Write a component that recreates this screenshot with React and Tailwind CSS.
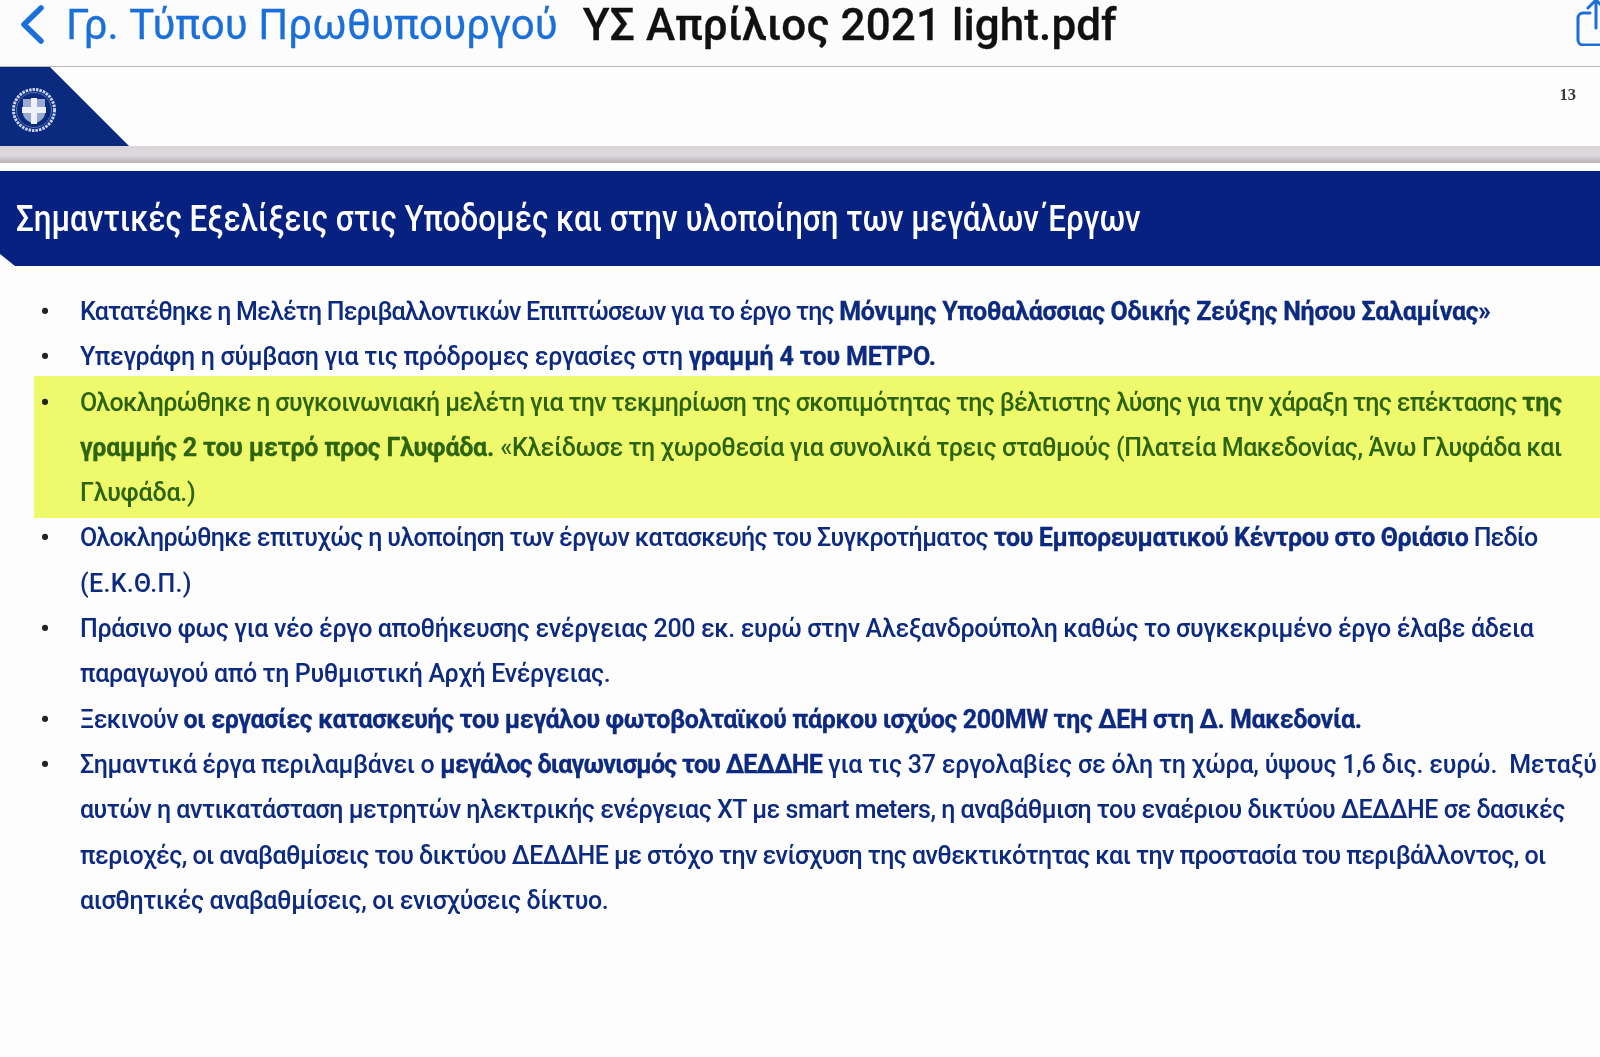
import React from "react";

const S = ({ c, children }) => <span className={`font-medium ${c}`}>{children}</span>;
const B = ({ c, children }) => <span className={`font-bold [-webkit-text-stroke:0.3px] ${c}`}>{children}</span>;

const items = [
  { lines: [<><S c="tracking-[-0.81px]">Κατατέθηκε η Μελέτη Περιβαλλοντικών Επιπτώσεων για το έργο της </S><B c="tracking-[-0.3px]">Μόνιμης Υποθαλάσσιας Οδικής Ζεύξης Νήσου Σαλαμίνας»</B></>] },
  { lines: [<><S c="tracking-[-0.3px]">Υπεγράφη η σύμβαση για τις πρόδρομες εργασίες στη </S><B c="tracking-[-0.14px]">γραμμή 4 του ΜΕΤΡΟ.</B></>] },
  { hl: true, lines: [
    <><S c="tracking-[-0.66px]">Ολοκληρώθηκε η συγκοινωνιακή μελέτη για την τεκμηρίωση της σκοπιμότητας της βέλτιστης λύσης για την χάραξη της επέκτασης </S><B c="tracking-[0px]">της</B></>,
    <><B c="tracking-[-0.23px]">γραμμής 2 του μετρό προς Γλυφάδα.</B> <S c="tracking-[-0.43px]">«Κλείδωσε τη χωροθεσία για συνολικά τρεις σταθμούς (Πλατεία Μακεδονίας, Άνω Γλυφάδα και</S></>,
    <S c="tracking-[-0.2px]">Γλυφάδα.)</S>,
  ] },
  { lines: [
    <><S c="tracking-[-0.62px]">Ολοκληρώθηκε επιτυχώς η υλοποίηση των έργων κατασκευής του Συγκροτήματος </S><B c="tracking-[-0.39px]">του Εμπορευματικού Κέντρου στο Θριάσιο</B><S c="tracking-[-0.88px]"> Πεδίο</S></>,
    <S c="tracking-[0.32px]">(Ε.Κ.Θ.Π.)</S>,
  ] },
  { lines: [
    <S c="tracking-[-0.365px]">Πράσινο φως για νέο έργο αποθήκευσης ενέργειας 200 εκ. ευρώ στην Αλεξανδρούπολη καθώς το συγκεκριμένο έργο έλαβε άδεια</S>,
    <S c="tracking-[-0.36px]">παραγωγού από τη Ρυθμιστική Αρχή Ενέργειας.</S>,
  ] },
  { lines: [<><S c="tracking-[-0.58px]">Ξεκινούν </S><B c="tracking-[-0.37px]">οι εργασίες κατασκευής του μεγάλου φωτοβολταϊκού πάρκου ισχύος 200MW της ΔΕΗ στη Δ. Μακεδονία.</B></>] },
  { lines: [
    <><S c="tracking-[-0.36px]">Σημαντικά έργα περιλαμβάνει ο </S><B c="tracking-[-0.73px]">μεγάλος διαγωνισμός του ΔΕΔΔΗΕ</B><S c="tracking-[-0.21px]"> για τις 37 εργολαβίες σε όλη τη χώρα, ύψους 1,6 δις. ευρώ.&nbsp; Μεταξύ</S></>,
    <S c="tracking-[-0.49px]">αυτών η αντικατάσταση μετρητών ηλεκτρικής ενέργειας ΧΤ με smart meters, η αναβάθμιση του εναέριου δικτύου ΔΕΔΔΗΕ σε δασικές</S>,
    <S c="tracking-[-0.574px]">περιοχές, οι αναβαθμίσεις του δικτύου ΔΕΔΔΗΕ με στόχο την ενίσχυση της ανθεκτικότητας και την προστασία του περιβάλλοντος, οι</S>,
    <S c="tracking-[-0.39px]">αισθητικές αναβαθμίσεις, οι ενισχύσεις δίκτυο.</S>,
  ] },
];

function Emblem() {
  return (
    <svg width="46" height="46" viewBox="0 0 46 46" className="block">
      <circle cx="23" cy="23" r="20.5" fill="none" stroke="#c9d3ec" strokeWidth="3" strokeDasharray="2.5 1" />
      <circle cx="23" cy="23" r="17.5" fill="none" stroke="#5c74ad" strokeWidth="1" />
      <path d="M12 12h22v14c0 6-6 9-11 11-5-2-11-5-11-11z" fill="#9aa9cf" />
      <path d="M20 11h6v9h9v6h-9v11h-6V26h-9v-6h9z" fill="#eef1f9" />
    </svg>
  );
}

export default function App() {
  return (
    <div className="w-[1600px] h-[1057px] overflow-hidden bg-[#fdfdfd] font-['Roboto','Liberation_Sans',sans-serif] blur-[0.6px]">
      <header className="h-[67px] bg-[#fcfcfc] border-b border-[#bdb9b9] flex items-start relative">
        <svg width="30" height="40" viewBox="0 0 30 40" className="ml-[17px] mt-[4px] shrink-0">
          <path d="M24 4 7 20.5 24 37" fill="none" stroke="#1a6fd8" strokeWidth="5.5" strokeLinecap="round" strokeLinejoin="round" />
        </svg>
        <span className="ml-[19px] text-[#1a6fd8] text-[42px] leading-[50px] whitespace-nowrap tracking-[0.1px] [-webkit-text-stroke:0.3px]">Γρ. Τύπου Πρωθυπουργού</span>
        <span className="ml-[25px] text-[#111] text-[44px] leading-[50px] font-medium whitespace-nowrap tracking-[0.1px] [-webkit-text-stroke:0.3px]">ΥΣ Απρίλιος 2021 light.pdf</span>
        <svg width="40" height="50" viewBox="0 0 40 50" className="absolute left-[1574px] top-[-4px]">
          <path d="M16 17H9a5 5 0 0 0-5 5v22a5 5 0 0 0 5 5h30" fill="none" stroke="#1a6fd8" strokeWidth="3" strokeLinecap="round" />
          <path d="M22 32V4M14 12l8-8 8 8" fill="none" stroke="#1a6fd8" strokeWidth="3" strokeLinecap="round" strokeLinejoin="round" />
        </svg>
      </header>

      <div className="h-[79px] flex justify-between relative">
        <svg width="130" height="79" viewBox="0 0 130 79" className="block">
          <polygon points="0,0 50,0 129,79 0,79" fill="#0a2a80" />
        </svg>
        <div className="absolute left-[11px] top-[20px]"><Emblem /></div>
        <span className="mt-[18px] mr-[24px] text-[16.5px] leading-[20px] font-bold text-[#3a3a3a] font-['Liberation_Serif',serif]">13</span>
      </div>

      <div className="h-[17px] bg-linear-to-b from-[#d8d4d8] via-[#dedade] to-[#b9b3b9]" />

      <h1 className="mt-[8px] h-[95px] bg-[#06217f] flex items-center pt-[1px] pl-[16px] text-white text-[37px] font-medium whitespace-nowrap [clip-path:polygon(0_0,100%_0,100%_100%,15px_100%,0_83px)]">
        <span className="block origin-left scale-x-[0.8465]">Σημαντικές Εξελίξεις στις Υποδομές και στην υλοποίηση των μεγάλων΄Εργων</span>
      </h1>

      <ul className="mt-[23px]">
        {items.map((item, i) => (
          <li key={i} className={`flex ml-[34px] ${item.hl ? "bg-[#eff96c] text-[#2c6410] -mt-[4px] pt-[4px] -mb-[3px] pb-[3px]" : "text-[#0c2a80]"}`}>
            <span className="w-[46px] pl-[6px] text-[30px] leading-[45.3px] text-[#222] shrink-0">•</span>
            <div>
              {item.lines.map((line, j) => (
                <div key={j} className="whitespace-nowrap text-[25px] leading-[45.3px]">{line}</div>
              ))}
            </div>
          </li>
        ))}
      </ul>
    </div>
  );
}
